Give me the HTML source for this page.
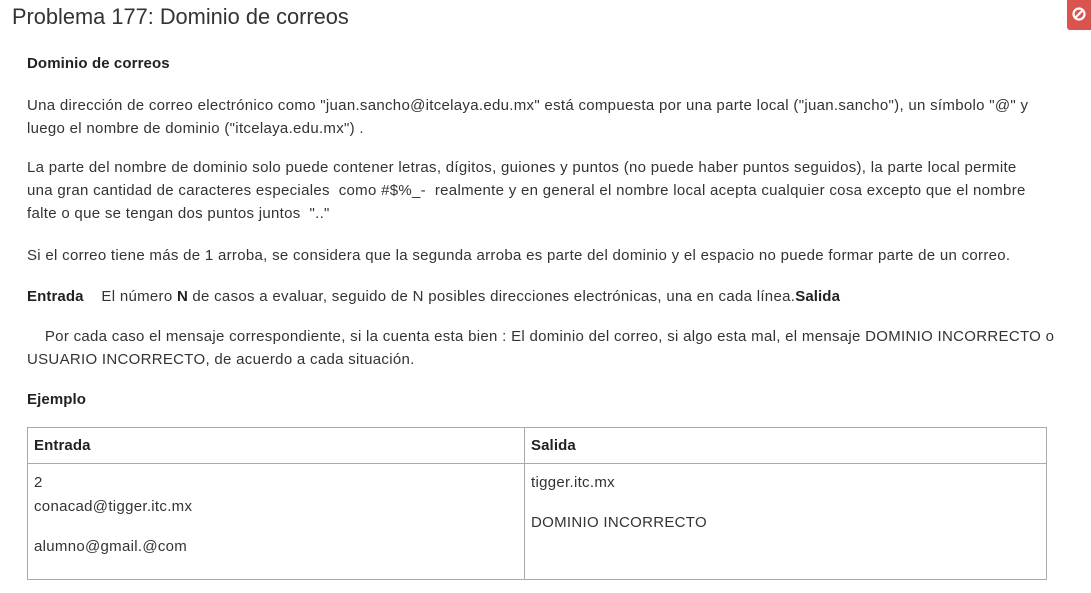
<!DOCTYPE html>
<html><head><meta charset="utf-8"><style>
body{margin:0;width:1091px;height:593px;background:#fff;font-family:"Liberation Sans",Arial,sans-serif;color:#333;position:relative;overflow:hidden}
.a{position:absolute;left:27px;font-size:15px;letter-spacing:0.3px;line-height:23px;white-space:nowrap}
h1{position:absolute;left:12px;top:4px;margin:0;font-weight:normal;font-size:21.8px;color:#333}
.btn{position:absolute;left:1067px;top:0;width:24px;height:30px;background:#d9534f;border-radius:0 0 0 3px}
table{position:absolute;left:27px;top:427px;width:1020px;border-collapse:collapse;font-size:15px;letter-spacing:0.3px}
td{border:1px solid #aaa;vertical-align:top;padding:0 6px}
b{color:#222;letter-spacing:0.1px}
</style></head><body>
<h1>Problema 177: Dominio de correos</h1>
<div class="btn"><svg width="24" height="30" viewBox="0 0 24 30"><circle cx="12" cy="14" r="5.5" fill="none" stroke="#fff" stroke-width="2.2"/><line x1="8.2" y1="17.8" x2="15.8" y2="10.2" stroke="#fff" stroke-width="2.2"/></svg></div>
<div class="a" style="top:52px"><b>Dominio de correos</b></div>
<div class="a" style="top:94px">Una dirección de correo electrónico como "juan.sancho@itcelaya.edu.mx" está compuesta por una parte local ("juan.sancho"), un símbolo "@" y<br>luego el nombre de dominio ("itcelaya.edu.mx") .</div>
<div class="a" style="top:156px">La parte del nombre de dominio solo puede contener letras, dígitos, guiones y puntos (no puede haber puntos seguidos), la parte local permite<br>una gran cantidad de caracteres especiales &nbsp;como #$%_- &nbsp;realmente y en general el nombre local acepta cualquier cosa excepto que el nombre<br>falte o que se tengan dos puntos juntos &nbsp;".."</div>
<div class="a" style="top:244px">Si el correo tiene más de 1 arroba, se considera que la segunda arroba es parte del dominio y el espacio no puede formar parte de un correo.</div>
<div class="a" style="top:285px"><b>Entrada</b> &nbsp;&nbsp; El número <b>N</b> de casos a evaluar, seguido de N posibles direcciones electrónicas, una en cada línea.<b>Salida</b></div>
<div class="a" style="top:325px">&nbsp;&nbsp;&nbsp; Por cada caso el mensaje correspondiente, si la cuenta esta bien : El dominio del correo, si algo esta mal, el mensaje DOMINIO INCORRECTO o<br>USUARIO INCORRECTO, de acuerdo a cada situación.</div>
<div class="a" style="top:388px"><b>Ejemplo</b></div>
<table>
<tr style="height:36px"><td style="width:484px;vertical-align:middle"><b>Entrada</b></td><td style="vertical-align:middle"><b>Salida</b></td></tr>
<tr style="height:116px"><td style="padding-top:7px;line-height:24px">2<br>conacad@tigger.itc.mx<br><div style="margin-top:16px">alumno@gmail.@com</div></td><td style="padding-top:7px;line-height:24px">tigger.itc.mx<br><div style="margin-top:16px">DOMINIO INCORRECTO</div></td></tr>
</table>
</body></html>
